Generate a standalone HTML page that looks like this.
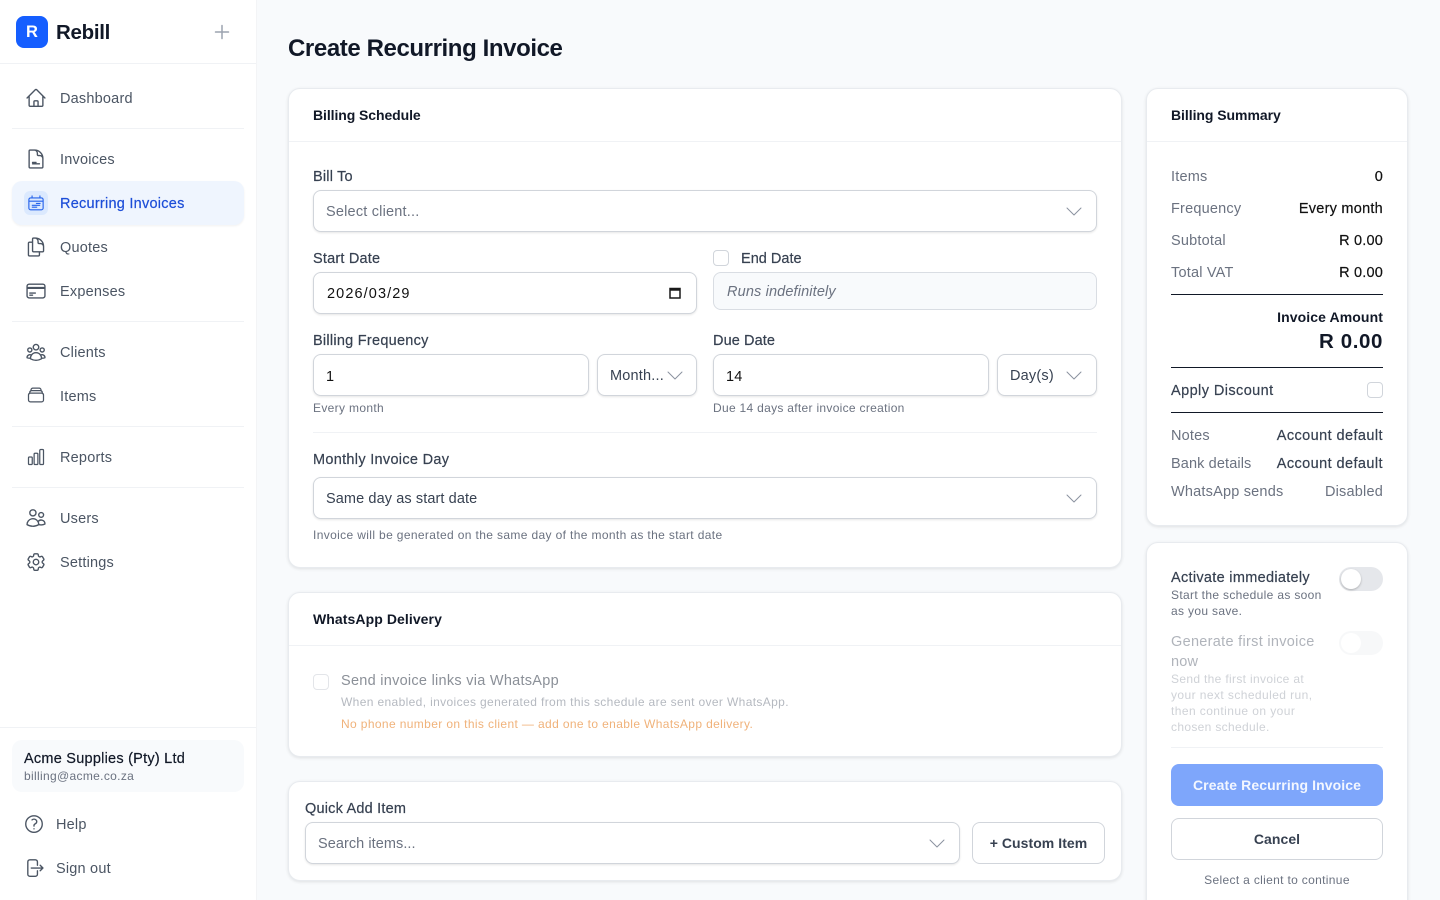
<!DOCTYPE html>
<html><head><meta charset="utf-8"><title>Create Recurring Invoice</title>
<style>
*{box-sizing:border-box}
html,body{margin:0;padding:0;width:1440px;height:900px;overflow:hidden;background:#f8fafc;font-family:"Liberation Sans",sans-serif}
#p{position:relative;width:1440px;height:900px;overflow:hidden}
.a{position:absolute}
.t{position:absolute;white-space:nowrap;line-height:20px;height:20px;font-size:14.5px;letter-spacing:.2px;color:#374151;margin-top:1px}
.r{text-align:right}
.n{color:#4b5563;left:60px}
.s{font-size:12px;letter-spacing:.33px;color:#6b7280;margin-top:0}
.b{font-weight:700;font-size:14px;letter-spacing:.05px;color:#111827;margin-top:0}
.k{color:#111827}
.g{color:#4b5563}
.m{-webkit-text-stroke:.2px currentColor}
.card{position:absolute;background:#fff;border:1px solid #e8ebef;border-radius:12px;box-shadow:0 1px 3px rgba(0,0,0,.1)}
.hl{position:absolute;height:1px;background:#f0f2f5}
.dl{position:absolute;height:1px;background:#111827}
.inp{position:absolute;background:#fff;border:1px solid #d1d5db;border-radius:8px;box-shadow:0 1px 2px rgba(0,0,0,.1)}
.cb{position:absolute;width:16px;height:16px;border:1px solid #d1d5db;border-radius:4px;background:#fff}
svg{position:absolute;fill:none;stroke:#4b5563;stroke-width:1.5;stroke-linecap:round;stroke-linejoin:round}
svg.i{width:22px;height:22px;left:25px}
svg.c{width:16px;height:16px;stroke:#8b93a0;stroke-width:1}
</style></head><body><div id="p">

<div class="a" style="left:0;top:0;width:257px;height:900px;background:#fff;border-right:1px solid #f3f4f6"></div>
<div class="a" style="left:16px;top:16px;width:32px;height:32px;border-radius:8px;background:#155eff;color:#fff;font-weight:700;font-size:16.5px;line-height:33px;text-align:center">R</div>
<span class="t" style="left:56px;top:21px;height:22px;line-height:22px;font-size:20.5px;font-weight:700;letter-spacing:-.3px;color:#111827">Rebill</span>
<svg style="left:213px;top:23px;width:18px;height:18px;stroke:#9ca3af;stroke-width:1.5" viewBox="0 0 18 18"><path d="M9 2.500v13M2.500 9h13"/></svg>
<div class="hl" style="left:0;top:63px;width:256px"></div>

<svg class="i" style="top:87px" viewBox="0 0 24 24"><path d="m2.25 12 8.954-8.955c.44-.439 1.152-.439 1.591 0L21.75 12M4.5 9.75v10.125c0 .621.504 1.125 1.125 1.125H9.75v-4.875c0-.621.504-1.125 1.125-1.125h2.25c.621 0 1.125.504 1.125 1.125V21h4.125c.621 0 1.125-.504 1.125-1.125V9.75M8.25 21h8.25"/></svg>
<span class="t n" style="top:88px">Dashboard</span>
<div class="hl" style="left:12px;top:128px;width:232px"></div>

<svg class="i" style="top:148px" viewBox="0 0 24 24"><path d="M19.5 14.25v-2.625a3.375 3.375 0 0 0-3.375-3.375h-1.5A1.125 1.125 0 0 1 13.5 7.125v-1.5a3.375 3.375 0 0 0-3.375-3.375H8.25m0 15h7.5M8.250 15.750H12M10.5 2.25H5.625c-.621 0-1.125.504-1.125 1.125v17.25c0 .621.504 1.125 1.125 1.125h12.75c.621 0 1.125-.504 1.125-1.125V11.25a9 9 0 0 0-9-9Z"/></svg>
<span class="t n" style="top:149px">Invoices</span>

<div class="a" style="left:12px;top:181px;width:232px;height:44px;border-radius:10px;background:#eff5fe;box-shadow:0 1px 2px rgba(0,0,0,.06)"></div>
<div class="a" style="left:24px;top:191px;width:24px;height:24px;border-radius:6px;background:#dbe9fe"></div>
<svg style="left:27px;top:194px;width:18px;height:18px;stroke:#2563eb;stroke-width:1.5" viewBox="0 0 24 24"><path d="M6.75 2.5v2.75M17.25 2.5v2.75M2.500 18.750V7.500a2.250 2.250 0 0 1 2.250-2.250h14.500a2.250 2.250 0 0 1 2.250 2.250v11.250a2.250 2.250 0 0 1-2.250 2.250H4.750a2.250 2.250 0 0 1-2.250-2.250ZM2.500 9.500h19M12.500 12.500h5M7 15h10M7 17.500h6" /></svg>
<span class="t m" style="left:60px;top:193px;color:#1d4ed8;letter-spacing:.25px">Recurring Invoices</span>

<svg class="i" style="top:236px" viewBox="0 0 24 24"><path d="M15.75 17.25v3.375c0 .621-.504 1.125-1.125 1.125h-9.75a1.125 1.125 0 0 1-1.125-1.125V7.875c0-.621.504-1.125 1.125-1.125H6.75a9.06 9.06 0 0 1 1.5.124m7.5 10.376h3.375c.621 0 1.125-.504 1.125-1.125V11.25c0-4.46-3.243-8.161-7.5-8.876a9.06 9.06 0 0 0-1.5-.124H9.375c-.621 0-1.125.504-1.125 1.125v3.5m7.5 10.375H9.375a1.125 1.125 0 0 1-1.125-1.125v-9.25m12 6.625v-1.875a3.375 3.375 0 0 0-3.375-3.375h-1.5a1.125 1.125 0 0 1-1.125-1.125v-1.5a3.375 3.375 0 0 0-3.375-3.375H9.75"/></svg>
<span class="t n" style="top:237px">Quotes</span>

<svg class="i" style="top:280px" viewBox="0 0 24 24"><path d="M2.25 8.25h19.5M2.25 9h19.5m-16.5 5.25h6m-6 2.25h3m-3.75 3h15a2.25 2.25 0 0 0 2.25-2.25V6.75A2.25 2.25 0 0 0 19.5 4.5h-15a2.25 2.25 0 0 0-2.25 2.25v10.5A2.25 2.25 0 0 0 4.5 19.5Z"/></svg>
<span class="t n" style="top:281px">Expenses</span>
<div class="hl" style="left:12px;top:321px;width:232px"></div>

<svg class="i" style="top:341px" viewBox="0 0 24 24"><path d="M18 18.72a9.094 9.094 0 0 0 3.741-.479 3 3 0 0 0-4.682-2.72m.94 3.198.001.031c0 .225-.012.447-.037.666A11.944 11.944 0 0 1 12 21c-2.17 0-4.207-.576-5.963-1.584A6.062 6.062 0 0 1 6 18.719m12 0a5.971 5.971 0 0 0-.941-3.197m0 0A5.995 5.995 0 0 0 12 12.75a5.995 5.995 0 0 0-5.058 2.772m0 0a3 3 0 0 0-4.681 2.72 8.986 8.986 0 0 0 3.74.477m.94-3.197a5.971 5.971 0 0 0-.94 3.197M15 6.75a3 3 0 1 1-6 0 3 3 0 0 1 6 0Zm6 3a2.25 2.25 0 1 1-4.5 0 2.25 2.25 0 0 1 4.5 0Zm-13.5 0a2.25 2.25 0 1 1-4.5 0 2.25 2.25 0 0 1 4.5 0Z"/></svg>
<span class="t n" style="top:342px">Clients</span>

<svg class="i" style="left:26px;top:385px;width:20px;height:20px" viewBox="0 0 24 24"><path d="M6 6.878V6a2.25 2.25 0 0 1 2.25-2.25h7.5A2.25 2.25 0 0 1 18 6v.878m-12 0c.235-.083.487-.128.75-.128h10.5c.263 0 .515.045.75.128m-12 0A2.25 2.25 0 0 0 4.5 9v.878m13.5-3A2.25 2.25 0 0 1 19.5 9v.878m0 0a2.246 2.246 0 0 0-.75-.128H5.25c-.263 0-.515.045-.75.128m15 0A2.25 2.25 0 0 1 21 12v6a2.25 2.25 0 0 1-2.25 2.25H5.25A2.25 2.25 0 0 1 3 18v-6c0-.98.626-1.813 1.5-2.122"/></svg>
<span class="t n" style="top:386px">Items</span>
<div class="hl" style="left:12px;top:426px;width:232px"></div>

<svg class="i" style="left:26px;top:447px;width:20px;height:20px" viewBox="0 0 24 24"><path d="M3 13.125C3 12.504 3.504 12 4.125 12h2.25c.621 0 1.125.504 1.125 1.125v6.75C7.5 20.496 6.996 21 6.375 21h-2.25A1.125 1.125 0 0 1 3 19.875v-6.75ZM9.75 8.625c0-.621.504-1.125 1.125-1.125h2.25c.621 0 1.125.504 1.125 1.125v11.25c0 .621-.504 1.125-1.125 1.125h-2.25a1.125 1.125 0 0 1-1.125-1.125V8.625ZM16.5 4.125c0-.621.504-1.125 1.125-1.125h2.25C20.496 3 21 3.504 21 4.125v15.75c0 .621-.504 1.125-1.125 1.125h-2.25a1.125 1.125 0 0 1-1.125-1.125V4.125Z"/></svg>
<span class="t n" style="top:447px">Reports</span>
<div class="hl" style="left:12px;top:487px;width:232px"></div>

<svg class="i" style="top:507px" viewBox="0 0 24 24"><path d="M15 19.128a9.38 9.38 0 0 0 2.625.372 9.337 9.337 0 0 0 4.121-.952 4.125 4.125 0 0 0-7.533-2.493M15 19.128v-.003c0-1.113-.285-2.16-.786-3.07M15 19.128v.106A12.318 12.318 0 0 1 8.624 21c-2.331 0-4.512-.645-6.374-1.766l-.001-.109a6.375 6.375 0 0 1 11.964-3.07M12 6.375a3.375 3.375 0 1 1-6.75 0 3.375 3.375 0 0 1 6.75 0Zm8.25 2.25a2.625 2.625 0 1 1-5.25 0 2.625 2.625 0 0 1 5.25 0Z"/></svg>
<span class="t n" style="top:508px">Users</span>

<svg class="i" style="top:551px" viewBox="0 0 24 24"><path d="M9.594 3.94c.09-.542.56-.94 1.11-.94h2.593c.55 0 1.02.398 1.11.94l.213 1.281c.063.374.313.686.645.87.074.04.147.083.22.127.325.196.72.257 1.075.124l1.217-.456a1.125 1.125 0 0 1 1.37.49l1.296 2.247a1.125 1.125 0 0 1-.26 1.431l-1.003.827c-.293.241-.438.613-.43.992a7.723 7.723 0 0 1 0 .255c-.008.378.137.75.43.991l1.004.827c.424.35.534.955.26 1.43l-1.298 2.247a1.125 1.125 0 0 1-1.369.491l-1.217-.456c-.355-.133-.75-.072-1.076.124a6.47 6.47 0 0 1-.22.128c-.331.183-.581.495-.644.869l-.213 1.281c-.09.543-.56.94-1.11.94h-2.594c-.55 0-1.019-.398-1.11-.94l-.213-1.281c-.062-.374-.312-.686-.644-.87a6.52 6.52 0 0 1-.22-.127c-.325-.196-.72-.257-1.076-.124l-1.217.456a1.125 1.125 0 0 1-1.369-.49l-1.297-2.247a1.125 1.125 0 0 1 .26-1.431l1.004-.827c.292-.24.437-.613.43-.991a6.932 6.932 0 0 1 0-.255c.007-.38-.138-.751-.43-.992l-1.004-.827a1.125 1.125 0 0 1-.26-1.43l1.297-2.247a1.125 1.125 0 0 1 1.37-.491l1.216.456c.356.133.751.072 1.076-.124.072-.044.146-.086.22-.128.332-.183.582-.495.644-.869l.214-1.28Z"/><path d="M15 12a3 3 0 1 1-6 0 3 3 0 0 1 6 0Z"/></svg>
<span class="t n" style="top:552px">Settings</span>

<div class="hl" style="left:0;top:727px;width:256px"></div>
<div class="a" style="left:12px;top:740px;width:232px;height:52px;border-radius:10px;background:#f8fafc"></div>
<span class="t k m" style="left:24px;top:748px;letter-spacing:.24px">Acme Supplies (Pty) Ltd</span>
<span class="t s" style="left:24px;top:766px">billing@acme.co.za</span>
<svg class="i" style="left:23px;top:813px" viewBox="0 0 24 24"><path d="M9.879 7.519c1.171-1.025 3.071-1.025 4.242 0 1.172 1.025 1.172 2.687 0 3.712-.203.179-.43.326-.67.442-.745.361-1.45.999-1.45 1.827v.75M21 12a9 9 0 1 1-18 0 9 9 0 0 1 18 0Zm-9 5.25h.008v.008H12v-.008Z"/></svg>
<span class="t g" style="left:56px;top:814px">Help</span>
<svg class="i" style="left:23px;top:857px" viewBox="0 0 24 24"><path d="M15.75 9V5.25A2.25 2.25 0 0 0 13.5 3h-6a2.25 2.25 0 0 0-2.25 2.25v13.5A2.25 2.25 0 0 0 7.5 21h6a2.25 2.25 0 0 0 2.25-2.25V15m3 0 3-3m0 0-3-3m3 3H9"/></svg>
<span class="t g" style="left:56px;top:858px">Sign out</span>

<span class="t" style="left:288px;top:34px;height:28px;line-height:28px;font-size:24px;font-weight:700;letter-spacing:-.4px;color:#111827">Create Recurring Invoice</span>

<div class="card" style="left:288px;top:88px;width:834px;height:480px"></div>
<span class="t b" style="left:313px;top:105px;letter-spacing:-.08px">Billing Schedule</span>
<div class="hl" style="left:289px;top:141px;width:832px"></div>
<span class="t m" style="left:313px;top:166px">Bill To</span>
<div class="inp" style="left:313px;top:190px;width:784px;height:42px"></div>
<span class="t g" style="left:326px;top:201px;color:#6b7280">Select client...</span>
<svg class="c" style="left:1066px;top:203px" viewBox="0 0 16 16"><path d="M1 5l7 7 7-7"/></svg>

<span class="t m" style="left:313px;top:248px">Start Date</span>
<div class="inp" style="left:313px;top:272px;width:384px;height:42px"></div>
<span class="t" style="left:327px;top:283px;color:#111;letter-spacing:1.1px">2026/03/29</span>
<svg style="left:668px;top:286px;width:14px;height:14px;stroke:#1a1a1a;stroke-width:1.5" viewBox="0 0 14 14"><path d="M2 2.500h10v9.500H2z" stroke-linecap="butt" stroke-linejoin="miter"/><path d="M2 3.500h10" stroke-linecap="butt" stroke-width="2.500"/></svg>

<div class="cb" style="left:713px;top:250px"></div>
<span class="t m" style="left:741px;top:248px;letter-spacing:.02px">End Date</span>
<div class="a" style="left:713px;top:272px;width:384px;height:38px;background:#f8fafc;border:1px solid #d9dde3;border-radius:8px"></div>
<span class="t" style="left:727px;top:281px;font-style:italic;color:#6b7280;letter-spacing:.14px">Runs indefinitely</span>

<span class="t m" style="left:313px;top:330px;letter-spacing:.26px">Billing Frequency</span>
<div class="inp" style="left:313px;top:354px;width:276px;height:42px"></div>
<span class="t" style="left:326px;top:366px;color:#111">1</span>
<div class="inp" style="left:597px;top:354px;width:100px;height:42px"></div>
<span class="t" style="left:610px;top:365px">Month...</span>
<svg class="c" style="left:667px;top:367px" viewBox="0 0 16 16"><path d="M1 5l7 7 7-7"/></svg>
<span class="t s" style="left:313px;top:398px">Every month</span>

<span class="t m" style="left:713px;top:330px;letter-spacing:.1px">Due Date</span>
<div class="inp" style="left:713px;top:354px;width:276px;height:42px"></div>
<span class="t" style="left:726px;top:366px;color:#111">14</span>
<div class="inp" style="left:997px;top:354px;width:100px;height:42px"></div>
<span class="t" style="left:1010px;top:365px">Day(s)</span>
<svg class="c" style="left:1066px;top:367px" viewBox="0 0 16 16"><path d="M1 5l7 7 7-7"/></svg>
<span class="t s" style="left:713px;top:398px;letter-spacing:.3px">Due 14 days after invoice creation</span>

<div class="hl" style="left:313px;top:432px;width:784px"></div>
<span class="t m" style="left:313px;top:449px;letter-spacing:.3px">Monthly Invoice Day</span>
<div class="inp" style="left:313px;top:477px;width:784px;height:42px"></div>
<span class="t" style="left:326px;top:488px;letter-spacing:.1px">Same day as start date</span>
<svg class="c" style="left:1066px;top:490px" viewBox="0 0 16 16"><path d="M1 5l7 7 7-7"/></svg>
<span class="t s" style="left:313px;top:525px;letter-spacing:.36px">Invoice will be generated on the same day of the month as the start date</span>

<div class="card" style="left:288px;top:592px;width:834px;height:165px"></div>
<span class="t b" style="left:313px;top:609px;letter-spacing:.08px">WhatsApp Delivery</span>
<div class="hl" style="left:289px;top:645px;width:832px"></div>
<div class="cb" style="left:313px;top:674px;opacity:.6"></div>
<span class="t" style="left:341px;top:670px;color:#8b9098;letter-spacing:.27px">Send invoice links via WhatsApp</span>
<span class="t s" style="left:341px;top:692px;color:#b5b9c0;letter-spacing:.36px">When enabled, invoices generated from this schedule are sent over WhatsApp.</span>
<span class="t s" style="left:341px;top:714px;color:#f0b27a;letter-spacing:.37px">No phone number on this client — add one to enable WhatsApp delivery.</span>

<div class="card" style="left:288px;top:781px;width:834px;height:100px"></div>
<span class="t m" style="left:305px;top:798px">Quick Add Item</span>
<div class="inp" style="left:305px;top:822px;width:655px;height:42px"></div>
<span class="t" style="left:318px;top:833px;color:#6b7280;letter-spacing:.06px">Search items...</span>
<svg class="c" style="left:929px;top:835px" viewBox="0 0 16 16"><path d="M1 5l7 7 7-7"/></svg>
<div class="a" style="left:972px;top:822px;width:133px;height:42px;background:#fff;border:1px solid #d1d5db;border-radius:8px"></div>
<span class="t b" style="left:972px;width:133px;top:833px;text-align:center;color:#374151">+ Custom Item</span>

<div class="card" style="left:1146px;top:88px;width:262px;height:438px"></div>
<span class="t b" style="left:1171px;top:105px;letter-spacing:-.05px">Billing Summary</span>
<div class="hl" style="left:1147px;top:141px;width:260px"></div>
<span class="t" style="left:1171px;top:166px;color:#6b7280">Items</span>
<span class="t r m" style="right:57px;top:166px;color:#111">0</span>
<span class="t" style="left:1171px;top:198px;color:#6b7280">Frequency</span>
<span class="t r m" style="right:57px;top:198px;color:#111;letter-spacing:.25px">Every month</span>
<span class="t" style="left:1171px;top:230px;color:#6b7280">Subtotal</span>
<span class="t r m" style="right:57px;top:230px;color:#111">R 0.00</span>
<span class="t" style="left:1171px;top:262px;color:#6b7280">Total VAT</span>
<span class="t r m" style="right:57px;top:262px;color:#111">R 0.00</span>
<div class="dl" style="left:1171px;top:294px;width:212px"></div>
<span class="t b r" style="right:57px;top:307px;letter-spacing:.1px">Invoice Amount</span>
<span class="t r" style="right:57px;top:331px;font-size:20.5px;font-weight:700;color:#111827;letter-spacing:.6px">R 0.00</span>
<div class="dl" style="left:1171px;top:367px;width:212px"></div>
<span class="t m" style="left:1171px;top:380px;letter-spacing:.42px">Apply Discount</span>
<div class="cb" style="left:1367px;top:382px"></div>
<div class="dl" style="left:1171px;top:412px;width:212px"></div>
<span class="t" style="left:1171px;top:425px;color:#6b7280">Notes</span>
<span class="t r m" style="right:57px;top:425px;letter-spacing:.42px">Account default</span>
<span class="t" style="left:1171px;top:453px;color:#6b7280;letter-spacing:.12px">Bank details</span>
<span class="t r m" style="right:57px;top:453px;letter-spacing:.42px">Account default</span>
<span class="t" style="left:1171px;top:481px;color:#6b7280">WhatsApp sends</span>
<span class="t r" style="right:57px;top:481px;color:#6b7280">Disabled</span>

<div class="card" style="left:1146px;top:542px;width:262px;height:400px"></div>
<span class="t m" style="left:1171px;top:567px;letter-spacing:.3px">Activate immediately</span>
<span class="t s" style="left:1171px;top:585px">Start the schedule as soon</span>
<span class="t s" style="left:1171px;top:601px">as you save.</span>
<div class="a" style="left:1339px;top:567px;width:44px;height:24px;border-radius:12px;background:#e5e7eb"></div>
<div class="a" style="left:1341px;top:569px;width:20px;height:20px;border-radius:50%;background:#fff;box-shadow:0 1px 2px rgba(0,0,0,.25)"></div>
<span class="t" style="left:1171px;top:631px;color:#b0b4bb;letter-spacing:.3px">Generate first invoice</span>
<span class="t" style="left:1171px;top:651px;color:#b0b4bb">now</span>
<span class="t s" style="left:1171px;top:669px;color:#cfd2d7">Send the first invoice at</span>
<span class="t s" style="left:1171px;top:685px;color:#cfd2d7;letter-spacing:.42px">your next scheduled run,</span>
<span class="t s" style="left:1171px;top:701px;color:#cfd2d7;letter-spacing:.42px">then continue on your</span>
<span class="t s" style="left:1171px;top:717px;color:#cfd2d7">chosen schedule.</span>
<div class="a" style="left:1339px;top:631px;width:44px;height:24px;border-radius:12px;background:#f7f8f9"></div>
<div class="a" style="left:1341px;top:633px;width:20px;height:20px;border-radius:50%;background:#fff"></div>
<div class="hl" style="left:1171px;top:747px;width:212px"></div>
<div class="a" style="left:1171px;top:764px;width:212px;height:42px;border-radius:8px;background:#7ea6fb"></div>
<span class="t" style="left:1171px;width:212px;top:775px;margin-top:0;text-align:center;font-weight:700;font-size:14px;letter-spacing:.1px;color:#f3f7ff">Create Recurring Invoice</span>
<div class="a" style="left:1171px;top:818px;width:212px;height:42px;border-radius:8px;background:#fff;border:1px solid #d1d5db"></div>
<span class="t b" style="left:1171px;width:212px;top:829px;text-align:center;color:#374151">Cancel</span>
<span class="t s" style="left:1171px;width:212px;top:870px;text-align:center">Select a client to continue</span>
</div></body></html>
